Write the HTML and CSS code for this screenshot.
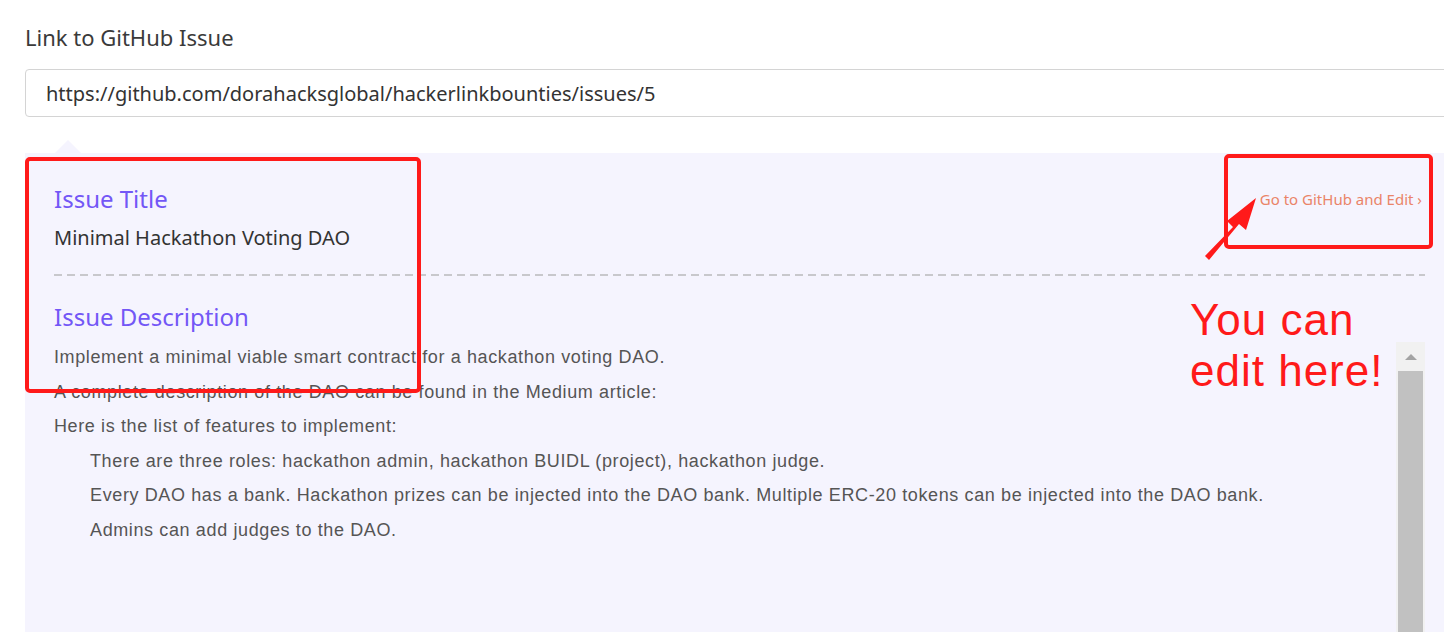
FILE: index.html
```html
<!DOCTYPE html>
<html lang="en">
<head>
<meta charset="utf-8">
<title>Link to GitHub Issue</title>
<link rel="stylesheet" href="styles.css">
</head>
<body>
<div class="page">
  <label class="field-label" for="issue-url">Link to GitHub Issue</label>
  <input id="issue-url" class="url-input" type="text" value="https://github.com/dorahacksglobal/hackerlinkbounties/issues/5">

  <section class="issue-panel">
    <div class="issue-head">
      <div class="issue-title-block">
        <h3 class="issue-heading">Issue Title</h3>
        <p class="issue-title">Minimal Hackathon Voting DAO</p>
      </div>
      <a class="edit-link" href="#">Go to GitHub and Edit ›</a>
    </div>
    <div class="dash-line"></div>
    <h3 class="issue-heading desc-heading">Issue Description</h3>
    <div class="desc-box">
      <div class="desc-content">
        <p>Implement a minimal viable smart contract for a hackathon voting DAO.</p>
        <p>A complete description of the DAO can be found in the Medium article:</p>
        <p>Here is the list of features to implement:</p>
        <p class="indent">There are three roles: hackathon admin, hackathon BUIDL (project), hackathon judge.</p>
        <p class="indent">Every DAO has a bank. Hackathon prizes can be injected into the DAO bank. Multiple ERC-20 tokens can be injected into the DAO bank.</p>
        <p class="indent">Admins can add judges to the DAO.</p>
      </div>
      <div class="scrollbar">
        <div class="scroll-btn"><span class="scroll-arrow"></span></div>
        <div class="scroll-thumb"></div>
      </div>
    </div>
  </section>

  <div class="note note-title"></div>
  <div class="note note-link"></div>
  <svg class="note-arrow" width="60" height="70" viewBox="0 0 60 70">
    <polygon points="2,66 30,37 24,31 53,8 43,40 36,34 6,70" fill="#ff1a1a"/>
  </svg>
  <div class="note-text">
    <div class="note-line">You can</div>
    <div class="note-line">edit here!</div>
  </div>
</div>
</body>
</html>
```

FILE: styles.css
```css
html, body {
  margin: 0;
  padding: 0;
  background: #ffffff;
  overflow: hidden;
}

.page {
  position: relative;
  width: 1440px;
  padding: 23px 0 0 25px;
  font-family: "Noto Sans", "Open Sans", sans-serif;
  color: #333333;
}

.field-label {
  display: block;
  font-size: 22px;
  line-height: 28px;
  color: #3a3a3a;
  margin-bottom: 18px;
}

.url-input {
  display: block;
  box-sizing: border-box;
  width: 1440px;
  height: 48px;
  margin: 0;
  padding: 0 20px;
  border: 1px solid #d4d4d4;
  border-radius: 4px;
  font-family: "Noto Sans", "Open Sans", sans-serif;
  font-size: 20px;
  color: #333333;
  background: #ffffff;
  outline: none;
}

.issue-panel {
  position: relative;
  margin-top: 36px;
  background: #f5f4fe;
  padding: 31px 40px 0 29px;
  height: 448px;
}

.issue-panel::before {
  content: "";
  position: absolute;
  left: 30px;
  top: -13px;
  border-left: 13px solid transparent;
  border-right: 13px solid transparent;
  border-bottom: 13px solid #f5f4fe;
}

.issue-head {
  display: flex;
  justify-content: space-between;
  align-items: flex-start;
}

.issue-heading {
  margin: 0;
  font-size: 24px;
  line-height: 30px;
  font-weight: 400;
  color: #7357f6;
}

.issue-title {
  margin: 11px 0 0;
  font-size: 20px;
  line-height: 26px;
  color: #333333;
}

.edit-link {
  margin-top: 5px;
  margin-right: 3px;
  font-size: 15px;
  line-height: 20px;
  color: #ea8468;
  text-decoration: none;
}

.dash-line {
  height: 2px;
  margin-top: 23px;
  background: repeating-linear-gradient(to right, #c8c8cc 0 8px, transparent 8px 13px);
}

.desc-heading {
  margin-top: 26px;
}

.desc-box {
  display: flex;
  margin-top: 10px;
  height: 290px;
}

.desc-content {
  flex: 1;
  padding-top: 3px;
  font-family: "Liberation Sans", Arial, sans-serif;
  font-size: 18px;
  letter-spacing: 0.62px;
  color: #555555;
}

.desc-content p {
  margin: 0 0 10.5px;
  line-height: 24px;
}

.desc-content .indent {
  padding-left: 36px;
}

.scrollbar {
  width: 29px;
  display: flex;
  flex-direction: column;
  background: #f1f1f1;
}

.scroll-btn {
  height: 29px;
  display: flex;
  align-items: center;
  justify-content: center;
}

.scroll-arrow {
  width: 0;
  height: 0;
  border-left: 6px solid transparent;
  border-right: 6px solid transparent;
  border-bottom: 6px solid #a3a3a3;
}

.scroll-thumb {
  flex: 1;
  margin: 0 2px;
  background: #c1c1c1;
}

/* annotation overlays */
.note {
  position: absolute;
  border: 4px solid #ff1a1a;
  border-radius: 5px;
  box-sizing: border-box;
}

.note-title {
  left: 25px;
  top: 157px;
  width: 396px;
  height: 236px;
}

.note-link {
  left: 1224px;
  top: 154px;
  width: 209px;
  height: 95px;
}

.note-arrow {
  position: absolute;
  left: 1203px;
  top: 190px;
}

.note-text {
  position: absolute;
  left: 1190px;
  top: 294px;
  font-family: "Liberation Sans", Arial, sans-serif;
  font-size: 44px;
  letter-spacing: 1px;
  color: #ff1a1a;
}

.note-line {
  line-height: 51px;
}
```
